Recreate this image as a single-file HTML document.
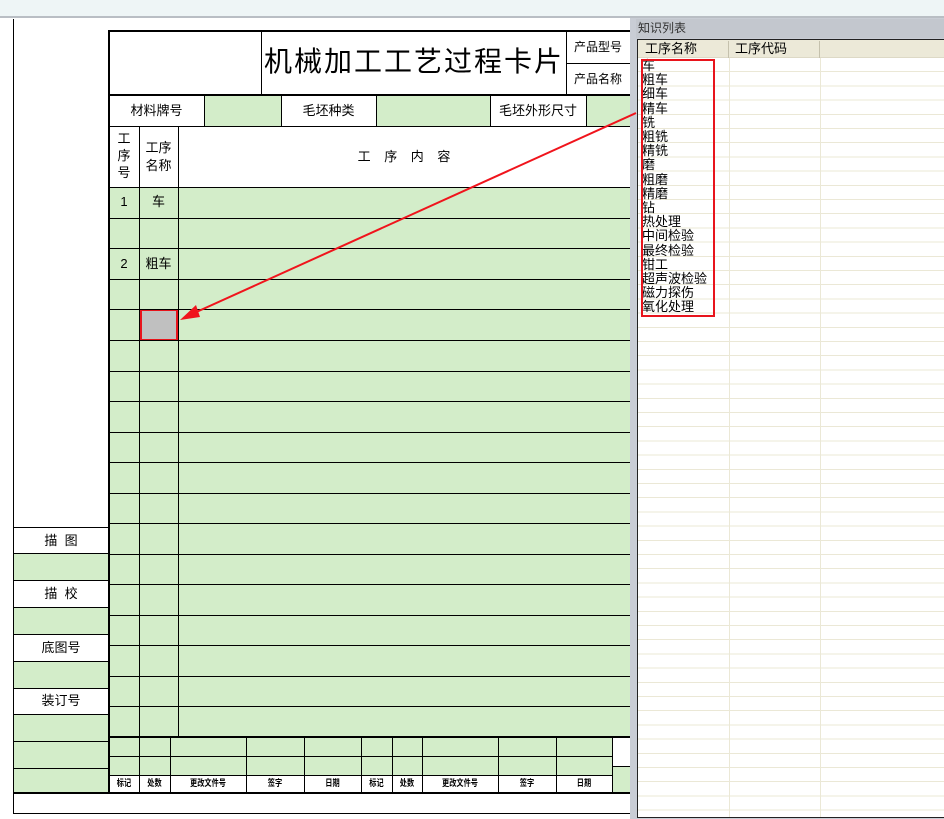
<!DOCTYPE html>
<html><head><meta charset="utf-8">
<style>
*{margin:0;padding:0;box-sizing:border-box}
body{width:944px;height:819px;position:relative;background:#fff;overflow:hidden;font-family:"Liberation Sans","Noto Sans CJK SC",sans-serif}
div{position:absolute}
.h{height:1px;background:#000}
.v{width:1px;background:#000}
.g{background:#d3edc9}
.t{font-size:13px;color:#000;text-align:center;line-height:1;white-space:nowrap}
.s{font-size:9px;font-weight:bold;transform:scaleX(.8)}
</style></head><body>
<div style="left:0;top:0;width:944px;height:16px;background:#eef5f6"></div>
<div style="left:0;top:16px;width:944px;height:2px;background:#b9bec4"></div>

<div class="g" style="left:204px;top:96px;width:77px;height:30px"></div>
<div class="g" style="left:376px;top:96px;width:114px;height:30px"></div>
<div class="g" style="left:586px;top:96px;width:44px;height:30px"></div>
<div class="g" style="left:109px;top:187px;width:521px;height:550px"></div>
<div class="g" style="left:109px;top:737px;width:503px;height:38px"></div>
<div class="g" style="left:612px;top:766px;width:18px;height:27px"></div>
<div class="g" style="left:13px;top:553px;width:96px;height:27px"></div>
<div class="g" style="left:13px;top:607px;width:96px;height:27px"></div>
<div class="g" style="left:13px;top:661px;width:96px;height:27px"></div>
<div class="g" style="left:13px;top:714px;width:96px;height:79px"></div>

<div style="left:140px;top:309px;width:38px;height:32px;background:#c0c0c0;border:2px solid #e8141c"></div>

<div class="h" style="left:109px;top:30px;width:521px;height:2px"></div>
<div class="h" style="left:109px;top:94px;width:521px;height:2px"></div>
<div class="h" style="left:566px;top:63px;width:64px"></div>
<div class="h" style="left:109px;top:126px;width:521px"></div>
<div class="h" style="left:109px;top:187px;width:521px"></div>
<div class="h" style="left:109px;top:218px;width:521px"></div>
<div class="h" style="left:109px;top:248px;width:521px"></div>
<div class="h" style="left:109px;top:279px;width:521px"></div>
<div class="h" style="left:109px;top:309px;width:521px"></div>
<div class="h" style="left:109px;top:340px;width:521px"></div>
<div class="h" style="left:109px;top:371px;width:521px"></div>
<div class="h" style="left:109px;top:401px;width:521px"></div>
<div class="h" style="left:109px;top:432px;width:521px"></div>
<div class="h" style="left:109px;top:462px;width:521px"></div>
<div class="h" style="left:109px;top:493px;width:521px"></div>
<div class="h" style="left:109px;top:523px;width:521px"></div>
<div class="h" style="left:109px;top:554px;width:521px"></div>
<div class="h" style="left:109px;top:584px;width:521px"></div>
<div class="h" style="left:109px;top:615px;width:521px"></div>
<div class="h" style="left:109px;top:645px;width:521px"></div>
<div class="h" style="left:109px;top:676px;width:521px"></div>
<div class="h" style="left:109px;top:706px;width:521px"></div>
<div class="h" style="left:109px;top:736px;width:521px;height:2px"></div>
<div class="h" style="left:109px;top:756px;width:503px"></div>
<div class="h" style="left:109px;top:775px;width:503px"></div>
<div class="h" style="left:612px;top:766px;width:18px"></div>
<div class="h" style="left:13px;top:792px;width:617px;height:2px"></div>
<div class="h" style="left:13px;top:813px;width:617px"></div>
<div class="h" style="left:13px;top:527px;width:96px"></div>
<div class="h" style="left:13px;top:553px;width:96px"></div>
<div class="h" style="left:13px;top:580px;width:96px"></div>
<div class="h" style="left:13px;top:607px;width:96px"></div>
<div class="h" style="left:13px;top:634px;width:96px"></div>
<div class="h" style="left:13px;top:661px;width:96px"></div>
<div class="h" style="left:13px;top:688px;width:96px"></div>
<div class="h" style="left:13px;top:714px;width:96px"></div>
<div class="h" style="left:13px;top:741px;width:96px"></div>
<div class="h" style="left:13px;top:768px;width:96px"></div>

<div class="v" style="left:13px;top:19px;height:795px"></div>
<div class="v" style="left:108px;top:30px;height:764px;width:2px"></div>
<div class="v" style="left:261px;top:31px;height:64px"></div>
<div class="v" style="left:566px;top:31px;height:64px"></div>
<div class="v" style="left:204px;top:95px;height:31px"></div>
<div class="v" style="left:281px;top:95px;height:31px"></div>
<div class="v" style="left:376px;top:95px;height:31px"></div>
<div class="v" style="left:490px;top:95px;height:31px"></div>
<div class="v" style="left:586px;top:95px;height:31px"></div>
<div class="v" style="left:139px;top:126px;height:611px"></div>
<div class="v" style="left:178px;top:126px;height:611px"></div>
<div class="v" style="left:139px;top:737px;height:56px"></div>
<div class="v" style="left:170px;top:737px;height:56px"></div>
<div class="v" style="left:246px;top:737px;height:56px"></div>
<div class="v" style="left:304px;top:737px;height:56px"></div>
<div class="v" style="left:361px;top:737px;height:56px"></div>
<div class="v" style="left:392px;top:737px;height:56px"></div>
<div class="v" style="left:422px;top:737px;height:56px"></div>
<div class="v" style="left:498px;top:737px;height:56px"></div>
<div class="v" style="left:556px;top:737px;height:56px"></div>
<div class="v" style="left:612px;top:737px;height:56px"></div>

<div class="t" style="left:262px;top:48px;width:304px;font-size:28px;letter-spacing:2px">机械加工工艺过程卡片</div>
<div class="t" style="left:566px;top:41px;width:64px;font-size:12px">产品型号</div>
<div class="t" style="left:566px;top:73px;width:64px;font-size:12px">产品名称</div>
<div class="t" style="left:109px;top:104px;width:95px">材料牌号</div>
<div class="t" style="left:281px;top:104px;width:95px">毛坯种类</div>
<div class="t" style="left:490px;top:104px;width:96px">毛坯外形尺寸</div>
<div class="t" style="left:109px;top:130px;width:30px;line-height:17px">工<br>序<br>号</div>
<div class="t" style="left:139px;top:139px;width:39px;line-height:18px">工序<br>名称</div>
<div class="t" style="left:178px;top:150px;width:452px;word-spacing:10px">工 序 内 容</div>
<div class="t" style="left:109px;top:195px;width:30px">1</div>
<div class="t" style="left:139px;top:195px;width:39px">车</div>
<div class="t" style="left:109px;top:257px;width:30px">2</div>
<div class="t" style="left:139px;top:257px;width:39px">粗车</div>
<div class="t" style="left:13px;top:534px;width:96px">描&nbsp;&nbsp;图</div>
<div class="t" style="left:13px;top:587px;width:96px">描&nbsp;&nbsp;校</div>
<div class="t" style="left:13px;top:641px;width:96px">底图号</div>
<div class="t" style="left:13px;top:694px;width:96px">装订号</div>
<div class="t s" style="left:109px;top:779px;width:30px">标记</div>
<div class="t s" style="left:139px;top:779px;width:31px">处数</div>
<div class="t s" style="left:170px;top:779px;width:76px">更改文件号</div>
<div class="t s" style="left:246px;top:779px;width:58px">签字</div>
<div class="t s" style="left:304px;top:779px;width:57px">日期</div>
<div class="t s" style="left:361px;top:779px;width:31px">标记</div>
<div class="t s" style="left:392px;top:779px;width:30px">处数</div>
<div class="t s" style="left:422px;top:779px;width:76px">更改文件号</div>
<div class="t s" style="left:498px;top:779px;width:58px">签字</div>
<div class="t s" style="left:556px;top:779px;width:56px">日期</div>

<div style="left:630px;top:18px;width:314px;height:801px;background:#c9cdd5"></div>
<div style="left:636px;top:19px;width:308px;height:19px;background:#c3c7ce;font-size:12px;color:#333;padding:1px 0 0 2px;line-height:17px">知识列表</div>
<div style="left:637px;top:39px;width:307px;height:779px;background:#fff;border:1px solid #222;border-right:none;overflow:hidden">
  <div style="left:0;top:0;width:307px;height:18px;background:#ece9d8;border-bottom:1px solid #ddd9c6"></div>
  <div style="left:90px;top:1px;width:1px;height:17px;background:#c5c1ad"></div>
  <div style="left:181px;top:1px;width:1px;height:17px;background:#c5c1ad"></div>
  <div style="left:7px;top:2px;font-size:13px;line-height:14px">工序名称</div>
  <div style="left:97px;top:2px;font-size:13px;line-height:14px">工序代码</div>
  <div style="left:0;top:18px;width:307px;height:760px;background:repeating-linear-gradient(to bottom,transparent 0,transparent 13.2px,#ebe8d6 13.2px,#ebe8d6 14.2px)"></div>
  <div style="left:91px;top:18px;width:1px;height:760px;background:#ebe8d6"></div>
  <div style="left:182px;top:18px;width:1px;height:760px;background:#ebe8d6"></div>
  <div style="left:4px;top:19px;font-size:13px;line-height:14.2px">车<br>粗车<br>细车<br>精车<br>铣<br>粗铣<br>精铣<br>磨<br>粗磨<br>精磨<br>钻<br>热处理<br>中间检验<br>最终检验<br>钳工<br>超声波检验<br>磁力探伤<br>氧化处理</div>
  <div style="left:3px;top:19px;width:74px;height:258px;border:2px solid #e8141c"></div>
</div>

<svg style="position:absolute;left:0;top:0" width="944" height="819">
<line x1="636" y1="113" x2="192" y2="314" stroke="#f0141c" stroke-width="2"/>
<polygon points="180,320 196,305 200,317" fill="#f0141c"/>
</svg>
</body></html>
